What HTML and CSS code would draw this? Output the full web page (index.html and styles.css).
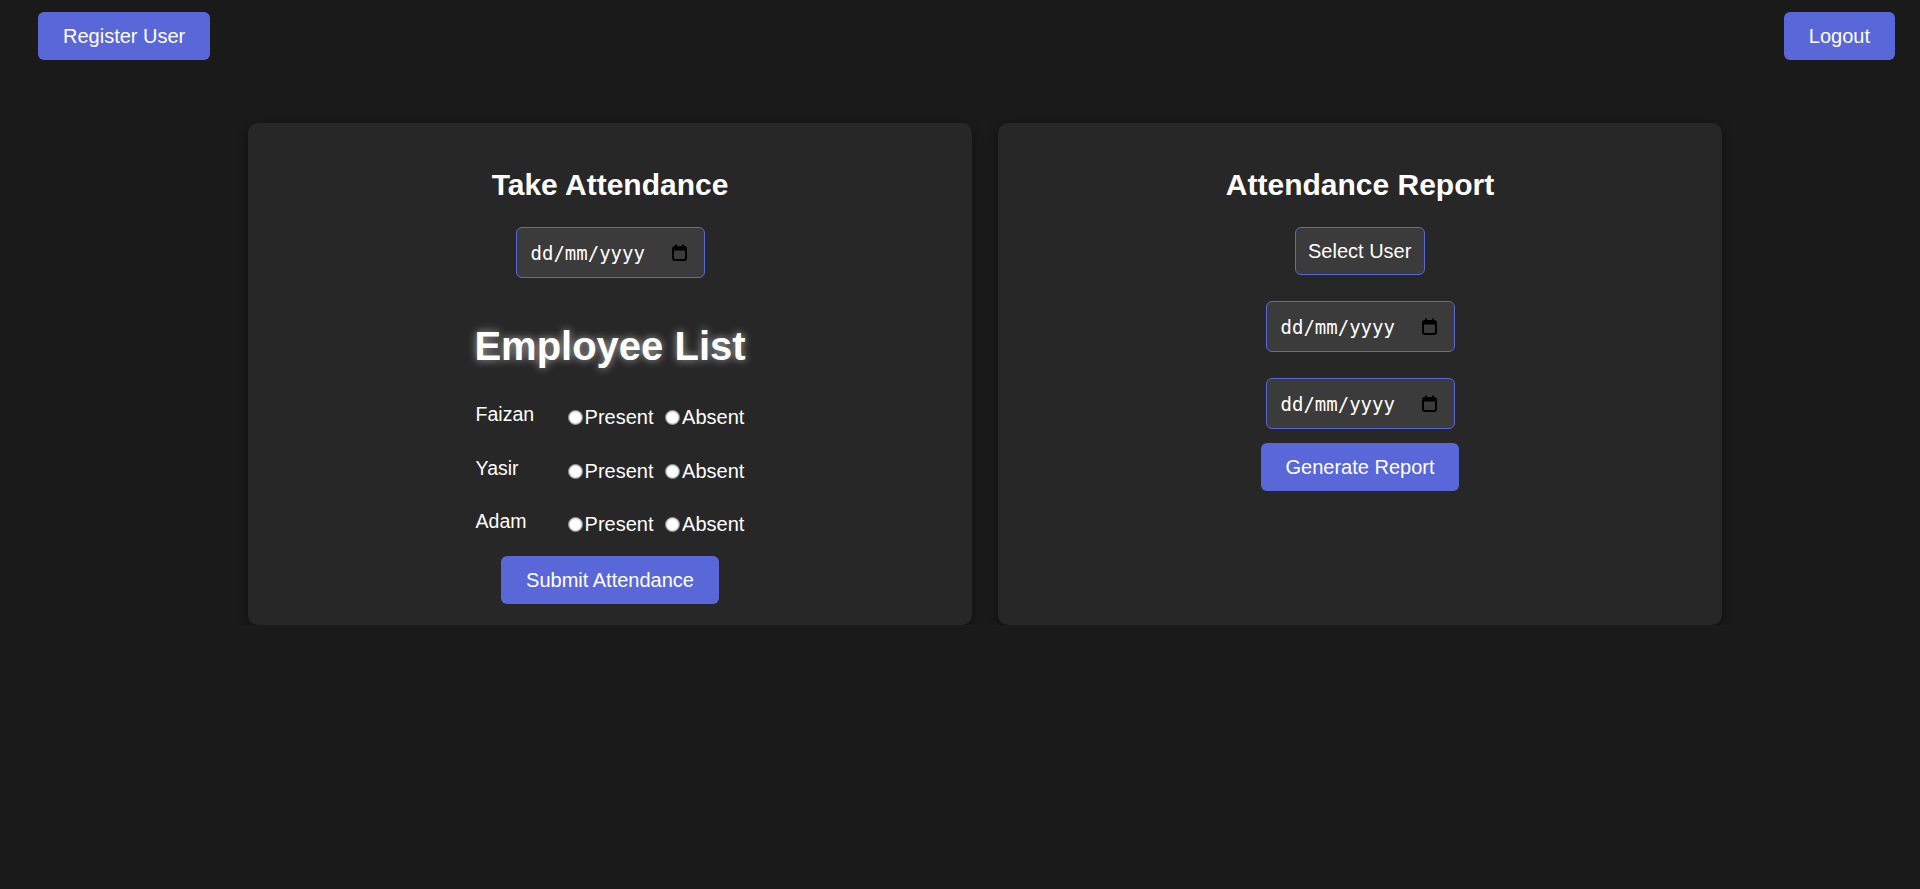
FILE: index.html
```html
<!DOCTYPE html>
<html lang="en">
<head>
<meta charset="utf-8">
<title>Attendance</title>
<link rel="stylesheet" href="styles.css">
</head>
<body>
<header class="topbar">
  <button class="btn">Register User</button>
  <button class="btn">Logout</button>
</header>
<main class="panels">
  <section class="card">
    <h2 class="card-title">Take Attendance</h2>
    <div class="date-field">
      <span class="date-text">dd/mm/yyyy</span>
      <svg class="cal-icon" width="15" height="17" viewBox="0 0 15 17"><rect x="1" y="3" width="13" height="13" rx="2" fill="none" stroke="#000" stroke-width="2"/><rect x="1" y="3" width="13" height="3.5" fill="#000"/><rect x="3" y="0.5" width="2" height="4" fill="#000"/><rect x="10" y="0.5" width="2" height="4" fill="#000"/></svg>
    </div>
    <h2 class="list-title">Employee List</h2>
    <div class="emp-list">
      <div class="emp-row">
        <span class="emp-name">Faizan</span>
        <span class="emp-opts"><input type="radio" name="faizan" id="f-p"><label for="f-p">Present</label> <input type="radio" name="faizan" id="f-a"><label for="f-a">Absent</label></span>
      </div>
      <div class="emp-row">
        <span class="emp-name">Yasir</span>
        <span class="emp-opts"><input type="radio" name="yasir" id="y-p"><label for="y-p">Present</label> <input type="radio" name="yasir" id="y-a"><label for="y-a">Absent</label></span>
      </div>
      <div class="emp-row">
        <span class="emp-name">Adam</span>
        <span class="emp-opts"><input type="radio" name="adam" id="a-p"><label for="a-p">Present</label> <input type="radio" name="adam" id="a-a"><label for="a-a">Absent</label></span>
      </div>
    </div>
    <button class="btn submit-btn">Submit Attendance</button>
  </section>
  <section class="card">
    <h2 class="card-title">Attendance Report</h2>
    <select class="user-select"><option>Select User</option></select>
    <div class="date-field report-date">
      <span class="date-text">dd/mm/yyyy</span>
      <svg class="cal-icon" width="15" height="17" viewBox="0 0 15 17"><rect x="1" y="3" width="13" height="13" rx="2" fill="none" stroke="#000" stroke-width="2"/><rect x="1" y="3" width="13" height="3.5" fill="#000"/><rect x="3" y="0.5" width="2" height="4" fill="#000"/><rect x="10" y="0.5" width="2" height="4" fill="#000"/></svg>
    </div>
    <div class="date-field report-date">
      <span class="date-text">dd/mm/yyyy</span>
      <svg class="cal-icon" width="15" height="17" viewBox="0 0 15 17"><rect x="1" y="3" width="13" height="13" rx="2" fill="none" stroke="#000" stroke-width="2"/><rect x="1" y="3" width="13" height="3.5" fill="#000"/><rect x="3" y="0.5" width="2" height="4" fill="#000"/><rect x="10" y="0.5" width="2" height="4" fill="#000"/></svg>
    </div>
    <button class="btn report-btn">Generate Report</button>
  </section>
</main>
</body>
</html>
```
FILE: styles.css
```css
html, body {
  margin: 0;
  padding: 0;
  background: #1a1a1a;
  color: #fff;
  font-family: "Liberation Sans", Arial, sans-serif;
  min-height: 100%;
}

.topbar {
  display: flex;
  justify-content: space-between;
  align-items: flex-start;
  padding: 12px 25px 0 38px;
}

.btn {
  background: #5a67d8;
  color: #fff;
  border: none;
  border-radius: 6px;
  font-family: "Liberation Sans", Arial, sans-serif;
  font-size: 20px;
  line-height: 24px;
  padding: 12px 25px;
  cursor: pointer;
  margin: 0;
}

.panels {
  display: flex;
  justify-content: center;
  align-items: stretch;
  gap: 26px;
  margin-top: 63px;
  padding-left: 50px;
}

.card {
  width: 724px;
  box-sizing: border-box;
  background: #272727;
  border-radius: 10px;
  box-shadow: 0 4px 12px rgba(0, 0, 0, 0.45);
  padding: 44px 0 21px;
  display: flex;
  flex-direction: column;
  align-items: center;
}

.card-title {
  margin: 0;
  font-size: 30px;
  line-height: 36px;
  font-weight: bold;
}

.date-field {
  margin-top: 24px;
  width: 189px;
  height: 51px;
  box-sizing: border-box;
  border: 1px solid #5a67d8;
  border-radius: 6px;
  background: #3b3b3b;
  display: flex;
  align-items: center;
  justify-content: space-between;
  padding: 0 17px 0 14px;
}

.date-text {
  font-family: "DejaVu Sans Mono", "Liberation Mono", monospace;
  font-size: 19px;
  color: #fff;
}

.cal-icon {
  display: block;
}

.list-title {
  margin: 45px 0 0;
  font-size: 40px;
  line-height: 46px;
  font-weight: bold;
  text-shadow: 0 0 8px rgba(255, 255, 255, 0.6);
}

.emp-list {
  margin-top: 33px;
  display: flex;
  flex-direction: column;
  gap: 26.5px;
}

.emp-row {
  display: flex;
  align-items: flex-start;
  height: 27px;
}

.emp-name {
  width: 86px;
  font-size: 19.5px;
  line-height: 24px;
}

.emp-opts {
  padding-top: 3px;
  font-size: 20px;
  line-height: 24px;
  white-space: nowrap;
}

.emp-opts input[type="radio"] {
  -webkit-appearance: none;
  appearance: none;
  box-sizing: border-box;
  width: 15px;
  height: 15px;
  margin: 3px 2px 0 6px;
  border-radius: 50%;
  background: #fff;
  border: 1px solid #8a8a8a;
  box-shadow: inset 0 0 0 1px #d8d8d8;
  vertical-align: -1px;
}

.submit-btn {
  margin-top: 20px;
}

.user-select {
  margin-top: 24px;
  -webkit-appearance: none;
  appearance: none;
  height: 48px;
  box-sizing: border-box;
  padding: 0 12px;
  border: 1px solid #5a67d8;
  border-radius: 6px;
  background: #3b3b3b;
  color: #fff;
  font-family: "Liberation Sans", Arial, sans-serif;
  font-size: 20px;
}

.report-date {
  margin-top: 26px;
}

.report-btn {
  margin-top: 14px;
}
```
